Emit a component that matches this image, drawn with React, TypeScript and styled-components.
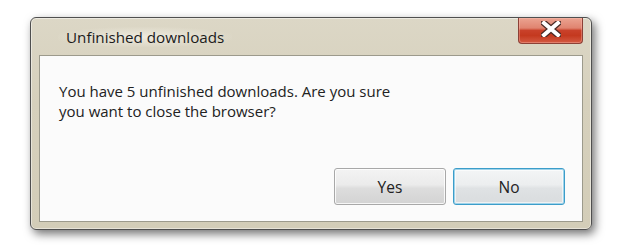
import React from "react";
import styled, { createGlobalStyle } from "styled-components";

const Global = createGlobalStyle`
  html, body { margin: 0; padding: 0; background: #ffffff; }
  body { font-family: "Open Sans", "Noto Sans", sans-serif; }
`;

const Page = styled.div`
  width: 630px;
  height: 249px;
  padding: 17px 0 0 30px;
  box-sizing: border-box;
`;

const Window = styled.div`
  width: 562px;
  height: 213px;
  box-sizing: border-box;
  border: 1px solid #4f4f4f;
  border-radius: 6px;
  background: linear-gradient(180deg, #dcd7c6 0%, #d6d0bc 40%, #d3cdb8 100%);
  box-shadow: 3px 4px 10px rgba(0, 0, 0, 0.55), inset 0 0 0 1px rgba(255, 255, 255, 0.45);
  display: flex;
  flex-direction: column;
  padding: 0 8px 7px 8px;
`;

const TitleBar = styled.div`
  height: 37px;
  display: flex;
  align-items: flex-start;
  justify-content: space-between;
`;

const Title = styled.div`
  margin-top: 9px;
  margin-left: 19px;
  padding: 0 8px;
  font-size: 15.2px;
  color: #1b1b1b;
  background: radial-gradient(ellipse at center, rgba(240, 237, 226, 0.9) 0%, rgba(240, 237, 226, 0) 75%);
`;

const CloseButton = styled.div`
  width: 65px;
  height: 26px;
  box-sizing: border-box;
  border: 1px solid #8c4036;
  border-top: none;
  border-radius: 0 0 4px 4px;
  background: linear-gradient(180deg, #eba391 0%, #e08470 40%, #c9412a 50%, #c4391f 70%, #d45a43 100%);
  box-shadow: inset 0 0 0 1px rgba(255, 200, 190, 0.35);
  display: flex;
  align-items: flex-start;
  justify-content: center;
  padding-top: 3px;
`;

const Content = styled.div`
  flex: 1;
  background: #fbfbfb;
  border: 1px solid #9c9a8c;
  display: flex;
  flex-direction: column;
  justify-content: space-between;
  padding: 25px 17px 16px 19px;
`;

const Message = styled.p`
  margin: 0;
  font-size: 15px;
  line-height: 20px;
  color: #222222;
`;

const ButtonRow = styled.div`
  display: flex;
  justify-content: flex-end;
  gap: 7px;
`;

const Button = styled.button<{ $default?: boolean }>`
  width: 112px;
  height: 37px;
  box-sizing: border-box;
  border-radius: 3px;
  font-family: "Open Sans", "Noto Sans", sans-serif;
  font-size: 15.5px;
  color: #222222;
  border: 1px solid ${(p) => (p.$default ? "#3c9dc9" : "#a8a8a8")};
  background: ${(p) =>
    p.$default
      ? "linear-gradient(180deg, #f3f5f6 0%, #eceeef 45%, #dfe2e4 55%, #d9dcde 100%)"
      : "linear-gradient(180deg, #f3f3f3 0%, #ebebeb 45%, #dddddd 55%, #d3d3d3 100%)"};
  box-shadow: ${(p) =>
    p.$default
      ? "inset 0 0 0 1px #9fd3ea, inset 0 0 0 2px rgba(255,255,255,0.6)"
      : "inset 0 0 0 1px rgba(255,255,255,0.8)"};
  padding: 0;
`;

const CloseGlyph = () => (
  <svg width="20" height="16" viewBox="0 0 20 16">
    <path
      d="M3 2 L17 14 M17 2 L3 14"
      stroke="#4a2a25"
      strokeWidth="6.5"
      strokeLinecap="square"
      fill="none"
    />
    <path
      d="M3 2 L17 14 M17 2 L3 14"
      stroke="#ffffff"
      strokeWidth="4"
      strokeLinecap="square"
      fill="none"
    />
  </svg>
);

export default function App() {
  return (
    <>
      <Global />
      <Page>
        <Window>
          <TitleBar>
            <Title>Unfinished downloads</Title>
            <CloseButton>
              <CloseGlyph />
            </CloseButton>
          </TitleBar>
          <Content>
            <Message>
              You have 5 unfinished downloads. Are you sure
              <br />
              you want to close the browser?
            </Message>
            <ButtonRow>
              <Button>Yes</Button>
              <Button $default>No</Button>
            </ButtonRow>
          </Content>
        </Window>
      </Page>
    </>
  );
}
